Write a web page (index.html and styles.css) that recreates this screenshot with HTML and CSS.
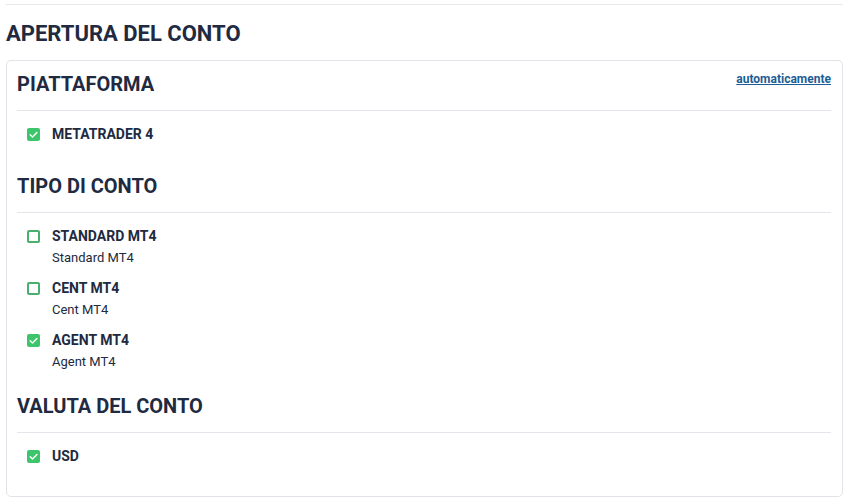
FILE: index.html
```html
<!DOCTYPE html>
<html lang="it">
<head>
<meta charset="utf-8">
<title>Apertura del conto</title>
<link rel="stylesheet" href="styles.css">
</head>
<body>
<div class="page">
  <hr class="top-rule">
  <h1 class="page-title">APERTURA DEL CONTO</h1>
  <div class="card">
    <section class="section section-first">
      <div class="section-head">
        <h2 class="section-title">PIATTAFORMA</h2>
        <a class="auto-link" href="#">automaticamente</a>
      </div>
      <div class="divider"></div>
      <ul class="options">
        <li class="option">
          <span class="check checked"><svg viewBox="0 0 13 13" width="13" height="13"><path d="M3.2 6.7 L5.5 9 L9.9 4.4" fill="none" stroke="#fff" stroke-width="1.4" stroke-linecap="round" stroke-linejoin="round"/></svg></span>
          <div class="opt-text"><div class="opt-label">METATRADER 4</div></div>
        </li>
      </ul>
    </section>
    <section class="section section-mid">
      <div class="section-head">
        <h2 class="section-title">TIPO DI CONTO</h2>
      </div>
      <div class="divider"></div>
      <ul class="options">
        <li class="option">
          <span class="check"></span>
          <div class="opt-text"><div class="opt-label">STANDARD MT4</div><div class="opt-sub">Standard MT4</div></div>
        </li>
        <li class="option">
          <span class="check"></span>
          <div class="opt-text"><div class="opt-label">CENT MT4</div><div class="opt-sub">Cent MT4</div></div>
        </li>
        <li class="option">
          <span class="check checked"><svg viewBox="0 0 13 13" width="13" height="13"><path d="M3.2 6.7 L5.5 9 L9.9 4.4" fill="none" stroke="#fff" stroke-width="1.4" stroke-linecap="round" stroke-linejoin="round"/></svg></span>
          <div class="opt-text"><div class="opt-label">AGENT MT4</div><div class="opt-sub">Agent MT4</div></div>
        </li>
      </ul>
    </section>
    <section class="section section-last">
      <div class="section-head">
        <h2 class="section-title">VALUTA DEL CONTO</h2>
      </div>
      <div class="divider"></div>
      <ul class="options">
        <li class="option">
          <span class="check checked"><svg viewBox="0 0 13 13" width="13" height="13"><path d="M3.2 6.7 L5.5 9 L9.9 4.4" fill="none" stroke="#fff" stroke-width="1.4" stroke-linecap="round" stroke-linejoin="round"/></svg></span>
          <div class="opt-text"><div class="opt-label">USD</div></div>
        </li>
      </ul>
    </section>
  </div>
</div>
</body>
</html>
```

FILE: styles.css
```css
* { box-sizing: border-box; }
html, body { margin: 0; padding: 0; background: #fff; }
body {
  font-family: Roboto, "Liberation Sans", Arial, sans-serif;
  color: #212a40;
}
.page {
  width: 837px;
  margin-left: 6px;
  padding-top: 4px;
}
.top-rule {
  margin: 0;
  border: 0;
  height: 1px;
  background: #e6e8ec;
}
.page-title {
  margin: 0;
  padding-top: 17px;
  height: 55px;
  font-size: 22px;
  line-height: 24px;
  font-weight: 700;
  letter-spacing: 0;
}
.card {
  border: 1px solid #e1e3e8;
  border-radius: 5px;
  padding: 11px 11px 30px 10px;
  height: 437px;
}
.section-head {
  display: flex;
  justify-content: space-between;
  align-items: flex-start;
  height: 24px;
  margin-bottom: 14px;
}
.section-title {
  margin: 0;
  font-size: 20px;
  line-height: 24px;
  font-weight: 700;
}
.auto-link {
  font-size: 12px;
  line-height: 14px;
  font-weight: 700;
  color: #1d5c94;
  text-decoration: underline;
}
.divider {
  height: 1px;
  background: #e3e5ea;
}
.options {
  list-style: none;
  margin: 0;
  padding: 14px 0 0 10px;
  display: flex;
  flex-direction: column;
  gap: 12px;
}
.option {
  display: flex;
  align-items: flex-start;
  gap: 12px;
}
.check {
  flex: none;
  width: 13px;
  height: 13px;
  margin-top: 3px;
  border: 2px solid #4aae6c;
  border-radius: 2px;
  background: #fff;
  display: flex;
}
.check.checked {
  border: 0;
  background: #3dc56c;
}
.check svg { display: block; }
.opt-label {
  font-size: 14px;
  line-height: 18px;
  font-weight: 700;
}
.opt-sub {
  margin-top: 4px;
  font-size: 13px;
  line-height: 18px;
  font-weight: 400;
}
.section-first { margin-bottom: 31px; }
.section-mid { margin-bottom: 23px; }
```
